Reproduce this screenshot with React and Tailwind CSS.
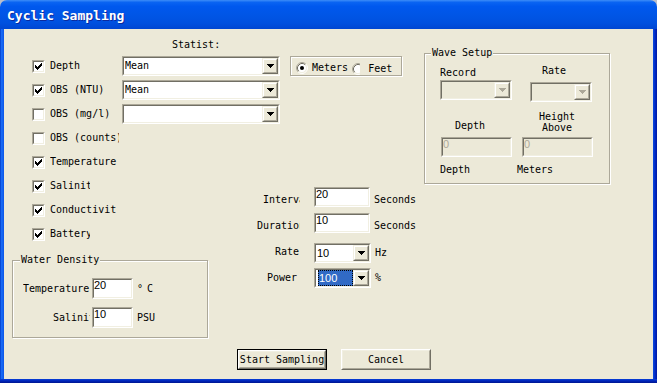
import React from "react";

function Sunken({ className = "", inner = "bg-white", children }) {
  return (
    <div className={"border border-t-[#ACA899] border-l-[#ACA899] border-r-white border-b-white " + className}>
      <div className={"h-full w-full flex border border-t-[#716F64] border-l-[#716F64] border-r-[#F1EFE2] border-b-[#F1EFE2] " + inner}>
        {children}
      </div>
    </div>
  );
}

function CheckMark() {
  return (
    <svg width="7" height="7" viewBox="0 0 7 7" shapeRendering="crispEdges" className="m-[1px]">
      <path
        d="M6 0h1v1h-1z M5 1h2v1h-2z M0 2h1v1h-1z M4 2h3v1h-3z M0 3h2v1h-2z M3 3h3v1h-3z M0 4h5v1h-5z M1 5h3v1h-3z M2 6h1v1h-1z"
        fill="#000"
      />
    </svg>
  );
}

function Radio({ checked }) {
  return (
    <svg width="12" height="12" viewBox="0 0 12 12" className="shrink-0">
      <circle cx="6" cy="6" r="4.5" fill="#fff" />
      <path d="M2.11 9.89 A5.5 5.5 0 0 1 9.89 2.11" stroke="#ACA899" fill="none" />
      <path d="M9.89 2.11 A5.5 5.5 0 0 1 2.11 9.89" stroke="#fff" fill="none" />
      <path d="M2.82 9.18 A4.5 4.5 0 0 1 9.18 2.82" stroke="#716F64" fill="none" />
      <path d="M9.18 2.82 A4.5 4.5 0 0 1 2.82 9.18" stroke="#F1EFE2" fill="none" />
      {checked && <circle cx="6" cy="6" r="2" fill="#000" />}
    </svg>
  );
}

function DropBtn({ disabled }) {
  return (
    <div className="w-[16px] h-full shrink-0 border border-t-[#F1EFE2] border-l-[#F1EFE2] border-r-[#716F64] border-b-[#716F64]">
      <div className="h-full w-full flex items-center justify-center bg-[#ECE9D8] border border-t-white border-l-white border-r-[#ACA899] border-b-[#ACA899]">
        <svg width="7" height="4" viewBox="0 0 7 4" shapeRendering="crispEdges">
          <path d="M0 0h7v1h-7z M1 1h5v1h-5z M2 2h3v1h-3z M3 3h1v1h-1z" fill={disabled ? "#ACA899" : "#000"} />
        </svg>
      </div>
    </div>
  );
}

function Combo({ className = "", value, disabled }) {
  return (
    <Sunken className={className} inner={disabled ? "bg-[#ECE9D8]" : "bg-white"}>
      <div className="flex-1 min-w-0 flex items-center pl-[1px] overflow-hidden whitespace-nowrap">{value}</div>
      <DropBtn disabled={disabled} />
    </Sunken>
  );
}

const sans = "font-['Liberation_Sans',Arial,sans-serif] text-[11px] leading-[11px]";

function Edit({ className = "", value, disabled }) {
  return (
    <Sunken className={className} inner={disabled ? "bg-[#ECE9D8]" : "bg-white"}>
      <span className={sans + (disabled ? " text-[#ACA899]" : " text-black")}>{value}</span>
    </Sunken>
  );
}

function CheckRow({ label, checked, labelW = "w-[72px]", children }) {
  return (
    <div className="h-[24px] flex items-center pl-[28px]">
      <Sunken className="w-[13px] h-[13px] shrink-0">{checked && <CheckMark />}</Sunken>
      <div className={"ml-[5px] overflow-hidden whitespace-nowrap shrink-0 " + labelW}>{label}</div>
      {children}
    </div>
  );
}

function Raised({ className = "", children }) {
  return (
    <div className={"border border-t-white border-l-white border-r-[#716F64] border-b-[#716F64] " + className}>
      <div className="h-full w-full flex items-center justify-center whitespace-nowrap bg-[#ECE9D8] border border-t-[#F1EFE2] border-l-[#F1EFE2] border-r-[#ACA899] border-b-[#ACA899]">
        {children}
      </div>
    </div>
  );
}

const etched = "border border-[#ACA899] shadow-[1px_1px_0_#FFFFFF,inset_1px_1px_0_#FFFFFF]";

export default function App() {
  return (
    <div className="w-[657px] h-[383px] bg-[#B9BECB] font-['DejaVu_Sans_Mono',monospace] text-[10px] leading-[12px] text-black">
      <div className="w-full h-full rounded-t-[7px] overflow-hidden flex flex-col">
        <div className="h-[29px] shrink-0 pl-[7px] pt-[8px] bg-[linear-gradient(to_bottom,#3D8DF8_0%,#0A64F2_8%,#0058EE_22%,#0055E5_55%,#0050DF_80%,#0046D2_100%)] text-white font-bold text-[13px] leading-[15px] [text-shadow:1px_1px_0_#0B2A9E]">
          Cyclic Sampling
        </div>
        <div className="h-[350px] flex">
          <div className="w-[4px] bg-[linear-gradient(to_right,#0039C8,#1A6DF7_40%,#0A55E8)]" />
          <div className="w-[649px] bg-[#ECE9D8] flex flex-col">
            <div className="flex items-start">
              {/* Left / middle column */}
              <div className="w-[416px] shrink-0 flex flex-col">
                <div className="mt-[10px] pl-[168px]">Statist:</div>
                <div className="mt-[3px]">
                  <CheckRow label="Depth" checked>
                    <Combo className="w-[158px] h-[20px]" value="Mean" />
                    <div className={"ml-[10px] w-[112px] h-[20px] flex items-center pt-[3px] " + etched}>
                      <div className="ml-[5px] flex items-center">
                        <Radio checked />
                        <span className="ml-[4px]">Meters</span>
                      </div>
                      <div className="ml-[4px] flex items-center mt-[3px]">
                        <div className="w-[8px] overflow-hidden">
                          <Radio />
                        </div>
                        <span className="ml-[8px]">Feet</span>
                      </div>
                    </div>
                  </CheckRow>
                  <CheckRow label="OBS (NTU)" checked>
                    <Combo className="w-[158px] h-[20px]" value="Mean" />
                  </CheckRow>
                  <CheckRow label="OBS (mg/l)">
                    <Combo className="w-[158px] h-[20px]" value="" />
                  </CheckRow>
                </div>
                <div className="flex">
                  <div className="w-[253px] shrink-0 flex flex-col">
                    <CheckRow label="OBS (counts)" labelW="w-[69px]" />
                    <CheckRow label="Temperature" checked labelW="w-[72px]" />
                    <CheckRow label="Salinity" checked labelW="w-[40px]" />
                    <CheckRow label="Conductivity" checked labelW="w-[66px]" />
                    <CheckRow label="Battery" checked labelW="w-[40px]" />
                    <fieldset className={"ml-[8px] mt-[8px] w-[196px] pb-[9px] " + etched}>
                      <legend className="ml-[7px] px-[1px] leading-[12px] bg-[#ECE9D8]">Water Density</legend>
                      <div className="mt-[12px] h-[21px] flex items-center">
                        <div className="ml-[10px] w-[67px] mr-[2px] overflow-hidden whitespace-nowrap">Temperature</div>
                        <Edit className="w-[41px] h-[21px]" value="20" />
                        <span className="ml-[4px]">°</span>
                        <span className="ml-[4px]">C</span>
                      </div>
                      <div className="mt-[8px] h-[21px] flex items-center">
                        <div className="ml-[40px] w-[37px] mr-[2px] overflow-hidden whitespace-nowrap">Salinity</div>
                        <Edit className="w-[41px] h-[21px]" value="10" />
                        <span className="ml-[4px]">PSU</span>
                      </div>
                    </fieldset>
                  </div>
                  <div className="flex flex-col">
                    <div className="mt-[61px] h-[20px] flex items-center">
                      <div className="w-[57px] shrink-0 pt-[6px]">
                        <div className="ml-[6px] w-[37px] overflow-hidden whitespace-nowrap">Interval</div>
                      </div>
                      <Edit className="w-[56px] h-[20px]" value="20" />
                      <span className="ml-[4px] pt-[6px]">Seconds</span>
                    </div>
                    <div className="mt-[6px] h-[20px] flex items-center">
                      <div className="w-[57px] shrink-0 pt-[6px]">
                        <div className="w-[43px] overflow-hidden whitespace-nowrap">Duration</div>
                      </div>
                      <Edit className="w-[56px] h-[20px]" value="10" />
                      <span className="ml-[4px] pt-[6px]">Seconds</span>
                    </div>
                    <div className="mt-[10px] h-[20px] flex items-center">
                      <div className="w-[57px] shrink-0 pb-[2px]">
                        <div className="ml-[18px]">Rate</div>
                      </div>
                      <Combo className="w-[57px] h-[20px]" value={<span className={sans}>10</span>} />
                      <span className="ml-[4px]">Hz</span>
                    </div>
                    <div className="mt-[5px] h-[20px] flex items-center">
                      <div className="w-[57px] shrink-0">
                        <div className="ml-[10px]">Power</div>
                      </div>
                      <Combo
                        className="w-[57px] h-[20px]"
                        value={
                          <div className="ml-[1px] self-stretch flex-1 flex items-center bg-[#316AC5] border border-dotted border-black">
                            <span className={sans + " text-white"}>100</span>
                          </div>
                        }
                      />
                      <span className="ml-[4px]">%</span>
                    </div>
                  </div>
                </div>
              </div>
              {/* Wave Setup */}
              <fieldset className={"ml-[4px] mt-[18px] w-[186px] pb-[7px] " + etched}>
                <legend className="ml-[6px] px-[1px] leading-[12px] bg-[#ECE9D8]">Wave Setup</legend>
                <div className="flex pl-[15px] gap-[10px]">
                  <div className="w-[72px] flex flex-col">
                    <div className="mt-[8px]">Record</div>
                    <Combo className="mt-[1px] w-[72px] h-[20px]" value="" disabled />
                    <div className="mt-[20px] ml-[15px]">Depth</div>
                    <Edit className="mt-[5px] ml-[1px] w-[71px] h-[20px]" value="0" disabled />
                    <div className="mt-[7px]">Depth</div>
                  </div>
                  <div className="w-[71px] flex flex-col">
                    <div className="mt-[6px] ml-[20px]">Rate</div>
                    <Combo className="mt-[5px] ml-[8px] w-[62px] h-[20px]" value="" disabled />
                    <div className="mt-[9px] ml-[17px] leading-[11px]">Height</div>
                    <div className="ml-[20px] leading-[11px]">Above</div>
                    <Edit className="mt-[4px] w-[71px] h-[20px]" value="0" disabled />
                    <div className="mt-[7px] ml-[-5px]">Meters</div>
                  </div>
                </div>
              </fieldset>
            </div>
            <div className="flex pl-[233px] mt-[11px] gap-[14px]">
              <div className="w-[90px] h-[21px] border border-black">
                <Raised className="w-full h-full">Start Sampling</Raised>
              </div>
              <Raised className="w-[90px] h-[21px]">Cancel</Raised>
            </div>
          </div>
          <div className="w-[4px] bg-[linear-gradient(to_right,#0A4BE0,#0025C0_60%,#001A9E)]" />
        </div>
        <div className="h-[4px] bg-[linear-gradient(to_bottom,#0840D8,#0023B8_50%,#00168F)]" />
      </div>
    </div>
  );
}
